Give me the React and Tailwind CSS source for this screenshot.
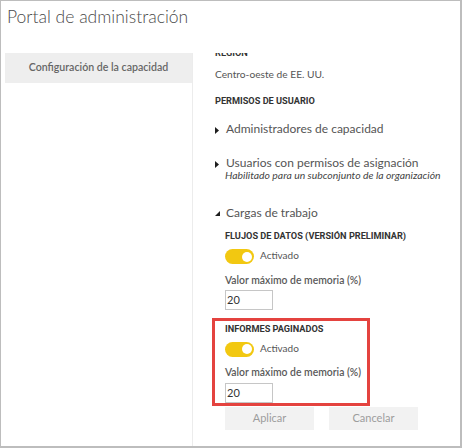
import React from "react";

const lato = { fontFamily: 'Lato, "Open Sans", sans-serif' };
const din = { fontFamily: 'Roboto, "Liberation Sans", sans-serif' };

function Toggle() {
  return (
    <div className="w-[29px] h-[15px] rounded-full bg-[#f2c811] flex items-center justify-end pr-[2.5px] shrink-0">
      <div className="w-[10px] h-[10px] rounded-full bg-white" />
    </div>
  );
}

function Tri() {
  return (
    <svg width="4" height="7" viewBox="0 0 4 7" className="shrink-0 mt-[6px]">
      <path d="M0 0 L4 3.5 L0 7 Z" fill="#1e1e1e" />
    </svg>
  );
}

function TriDown() {
  return (
    <svg width="5" height="5" viewBox="0 0 5 5" className="shrink-0 mt-[6px]">
      <path d="M5 0 L5 5 L0 5 Z" fill="#1e1e1e" />
    </svg>
  );
}

function MemInput() {
  return (
    <div className="w-[48px] h-[20px] border border-[#c6c6c6] bg-white text-[11px] leading-[18px] pl-[1px] text-[#333]">
      20
    </div>
  );
}

function Section({ children, mt }) {
  return (
    <div className={`${mt} text-[9.2px] leading-[12px] font-bold text-[#333]`} style={din}>
      {children}
    </div>
  );
}

function Workload({ title, first }) {
  return (
    <>
      <div
        className={`${first ? "mt-[9.5px]" : "mt-[1.85px]"} text-[9.2px] leading-[12px] font-bold text-[#333]`}
        style={din}
      >
        {title}
      </div>
      <div className="mt-[7px] flex items-start gap-[6px]">
        <Toggle />
        <span className="text-[10px] leading-[12px] text-[#555]">Activado</span>
      </div>
      <div className="mt-[8.5px] text-[10.4px] leading-[14px] font-semibold text-[#5a5a5a]">
        Valor máximo de memoria (%)
      </div>
      <div className="mt-[3.5px]">
        <MemInput />
      </div>
    </>
  );
}

export default function App() {
  return (
    <div className="w-[464px] h-[448px] bg-white" style={lato}>
      <div className="w-[462px] h-[448px] border-l border-t border-r-2 border-b-2 border-[#bdbdbd] flex flex-col">
        <div className="h-[52px] shrink-0 pl-[6px] pt-[2.5px] text-[17.5px] leading-[26px] font-light text-[#4a4a4a]">
          Portal de administración
        </div>
        <div className="flex flex-1 min-h-0">
          <div className="w-[192px] shrink-0 border-r border-[#ececec] pl-[4px]">
            <div className="h-[30px] bg-[#eeeeee] flex items-center justify-center text-[10.6px] font-semibold text-[#666]">
              Configuración de la capacidad
            </div>
          </div>
          <div className="flex-1 min-w-0 overflow-hidden pl-[22px] text-[#555]">
            <Section mt="mt-[-6.5px]">REGIÓN</Section>
            <div className="mt-[8.5px] text-[10.2px] leading-[14px] text-[#555]">Centro-oeste de EE. UU.</div>
            <Section mt="mt-[14px]">PERMISOS DE USUARIO</Section>
            <div className="mt-[13.5px] flex items-start gap-[7px] text-[12px] leading-[16px] text-[#555]">
              <Tri />
              <span>Administradores de capacidad</span>
            </div>
            <div className="mt-[18px] flex items-start gap-[7px] text-[12px] leading-[16px] text-[#555]">
              <Tri />
              <span>Usuarios con permisos de asignación</span>
            </div>
            <div className="mt-[-1.5px] ml-[10px] text-[10.4px] leading-[13px] italic text-[#444]">
              Habilitado para un subconjunto de la organización
            </div>
            <div className="mt-[22.5px] flex items-start gap-[6px] text-[12px] leading-[16px] text-[#555]">
              <TriDown />
              <span>Cargas de trabajo</span>
            </div>
            <div className="ml-[10px] flex flex-col items-start">
              <Workload title="FLUJOS DE DATOS (VERSIÓN PRELIMINAR)" first />
            </div>
            <div className="mt-[8px] ml-[-3px] w-[158px] h-[88px] border-[3px] border-[#e4433f] pl-[10px] flex flex-col items-start">
              <Workload title="INFORMES PAGINADOS" />
            </div>
            <div className="mt-[1px] ml-[10px] flex gap-[15px]">
              <div className="w-[89px] h-[23px] bg-[#f2f2f2] flex items-center justify-center text-[11px] text-[#9d9d9d]">
                Aplicar
              </div>
              <div className="w-[89px] h-[23px] bg-[#f2f2f2] flex items-center justify-center text-[11px] text-[#9d9d9d]">
                Cancelar
              </div>
            </div>
          </div>
        </div>
      </div>
    </div>
  );
}
